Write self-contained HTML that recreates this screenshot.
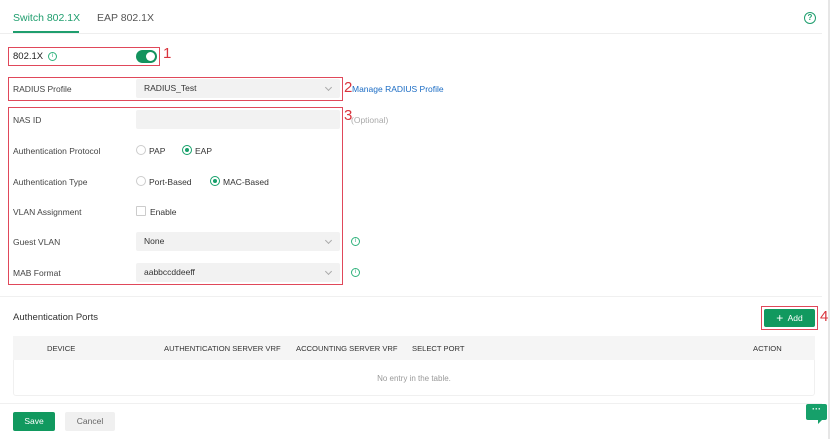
<!DOCTYPE html>
<html><head><style>
*{box-sizing:border-box;margin:0;padding:0}
body{width:831px;height:439px;background:#fff;font-family:"Liberation Sans",sans-serif;font-size:8.5px;color:#333;position:relative;overflow:hidden}
.a{position:absolute}
.lbl{position:absolute;left:13px;font-size:8.5px;color:#444}
.sel{position:absolute;left:136px;width:204px;height:19px;background:#f2f2f2;border-radius:2px;padding-left:8px;line-height:19px;color:#333}
.sel:after{content:"";position:absolute;right:9px;top:6px;width:4px;height:4px;border-right:1px solid #aaa;border-bottom:1px solid #aaa;transform:rotate(45deg)}
.red{position:absolute;border:1px solid #e0485a}
.num{position:absolute;color:#d9343d;font-size:15px}
.radio{position:absolute;width:10px;height:10px;border-radius:50%;border:1px solid #ccc}
.radio.on{border-color:#16a06a}
.radio.on:after{content:"";position:absolute;left:2px;top:2px;width:4px;height:4px;border-radius:50%;background:#16a06a}
.info{position:absolute;width:9px;height:9px;border-radius:50%;border:1px solid #2fb27c;color:#2fb27c;font-size:6px;line-height:7px;text-align:center}
.th{position:absolute;top:344px;font-size:7.6px;color:#333}
</style></head><body>
<div class="a" style="left:13px;top:12px;font-size:10.5px;color:#1f9e6e">Switch 802.1X</div>
<div class="a" style="left:13px;top:31px;width:66px;height:2px;background:#1f9e6e"></div>
<div class="a" style="left:97px;top:12px;font-size:10.5px;color:#555">EAP 802.1X</div>
<div class="a" style="left:0;top:33px;width:822px;height:1px;background:#eee"></div>
<div class="a" style="left:804px;top:12px;width:12px;height:12px;border-radius:50%;border:1.3px solid #1f9e6e;color:#1f9e6e;font-size:8px;line-height:10px;text-align:center;font-weight:bold">?</div>
<div class="a" style="left:828px;top:0;width:2px;height:439px;background:#e6e6e6"></div>

<div class="red" style="left:8px;top:47px;width:152px;height:19px"></div>
<div class="a" style="left:13px;top:51px;font-size:9.5px;color:#222">802.1X</div>
<div class="info" style="left:48px;top:52px">i</div>
<div class="a" style="left:136px;top:50px;width:21px;height:13px;border-radius:7px;background:#14935e"></div>
<div class="a" style="left:146px;top:52px;width:9px;height:9px;border-radius:50%;background:#fff"></div>
<div class="num" style="left:163px;top:45px">1</div>

<div class="red" style="left:8px;top:77px;width:335px;height:24px"></div>
<div class="lbl" style="top:84px">RADIUS Profile</div>
<div class="sel" style="top:79px">RADIUS_Test</div>
<div class="num" style="left:344px;top:79px">2</div>
<div class="a" style="left:352px;top:84px;color:#1b6cc4;font-size:8.5px">Manage RADIUS Profile</div>

<div class="red" style="left:8px;top:107px;width:335px;height:178px"></div>
<div class="num" style="left:344px;top:107px">3</div>
<div class="lbl" style="top:115px">NAS ID</div>
<div class="a" style="left:136px;top:110px;width:204px;height:19px;background:#f2f2f2;border-radius:2px"></div>
<div class="a" style="left:351px;top:115px;color:#aaa">(Optional)</div>

<div class="lbl" style="top:146px">Authentication Protocol</div>
<div class="radio" style="left:136px;top:145px"></div><div class="a" style="left:149px;top:146px">PAP</div>
<div class="radio on" style="left:182px;top:145px"></div><div class="a" style="left:195px;top:146px">EAP</div>

<div class="lbl" style="top:177px">Authentication Type</div>
<div class="radio" style="left:136px;top:176px"></div><div class="a" style="left:149px;top:177px">Port-Based</div>
<div class="radio on" style="left:210px;top:176px"></div><div class="a" style="left:223px;top:177px">MAC-Based</div>

<div class="lbl" style="top:207px">VLAN Assignment</div>
<div class="a" style="left:136px;top:206px;width:10px;height:10px;border:1px solid #ccc;border-radius:1px"></div>
<div class="a" style="left:150px;top:207px">Enable</div>

<div class="lbl" style="top:237px">Guest VLAN</div>
<div class="sel" style="top:232px">None</div>
<div class="info" style="left:351px;top:237px">i</div>

<div class="lbl" style="top:268px">MAB Format</div>
<div class="sel" style="top:263px">aabbccddeeff</div>
<div class="info" style="left:351px;top:268px">i</div>

<div class="a" style="left:0;top:296px;width:822px;height:1px;background:#f0f0f0"></div>
<div class="a" style="left:13px;top:312px;font-size:9.5px;color:#333">Authentication Ports</div>
<div class="red" style="left:761px;top:306px;width:57px;height:24px"></div>
<div class="a" style="left:764px;top:309px;width:51px;height:18px;background:#11995f;border-radius:2px;color:#fff;font-size:8.5px;line-height:18px;text-align:center"><span style="font-size:12px;vertical-align:-1px">+</span>&nbsp; Add</div>
<div class="num" style="left:820px;top:308px">4</div>

<div class="a" style="left:13px;top:336px;width:802px;height:60px;border:1px solid #f0f0f0;border-radius:3px"></div>
<div class="a" style="left:13px;top:336px;width:802px;height:24px;background:#f5f5f5"></div>
<div class="th" style="left:47px">DEVICE</div>
<div class="th" style="left:164px">AUTHENTICATION SERVER VRF</div>
<div class="th" style="left:296px">ACCOUNTING SERVER VRF</div>
<div class="th" style="left:412px">SELECT PORT</div>
<div class="th" style="left:753px">ACTION</div>
<div class="a" style="left:13px;top:374px;width:802px;text-align:center;color:#999;font-size:8px">No entry in the table.</div>

<div class="a" style="left:0;top:403px;width:822px;height:1px;background:#f0f0f0"></div>
<div class="a" style="left:13px;top:412px;width:42px;height:19px;background:#11995f;border-radius:2px;color:#fff;line-height:19px;text-align:center">Save</div>
<div class="a" style="left:65px;top:412px;width:50px;height:19px;background:#f0f0f0;border-radius:2px;color:#666;line-height:19px;text-align:center">Cancel</div>

<div class="a" style="left:806px;top:404px;width:21px;height:16px;background:#16a06a;border-radius:2px;color:#fff;font-size:9px;line-height:11px;text-align:center;font-weight:bold">···</div>
<div class="a" style="left:818px;top:419px;width:0;height:0;border-left:5px solid #16a06a;border-bottom:5px solid transparent"></div>
</body></html>
